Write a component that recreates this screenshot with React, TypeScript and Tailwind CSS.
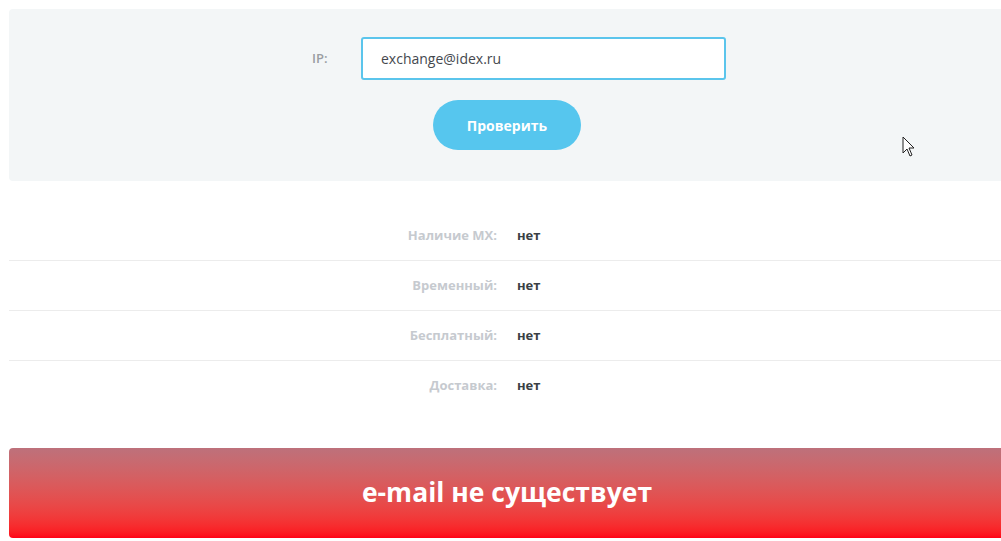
const rows = [
  { label: "Наличие MX:", value: "нет" },
  { label: "Временный:", value: "нет" },
  { label: "Бесплатный:", value: "нет" },
  { label: "Доставка:", value: "нет" },
];

function Cursor() {
  return (
    <svg className="absolute left-[902px] top-[136px]" width="16" height="24" viewBox="0 0 16 24">
      <path d="M1 1 L1 17 L5 13 L8 20 L10 19 L7 12 L12 12 Z" fill="#fff" stroke="#222" strokeWidth="1" strokeLinejoin="round" />
    </svg>
  );
}

export default function App() {
  return (
    <div className="relative w-[1001px] h-[541px] overflow-hidden bg-white pt-[9px] font-['Open_Sans',_'Liberation_Sans',_sans-serif]">
      <div className="ml-[9px] w-[996px]">
        {/* форма проверки */}
        <div className="bg-[#f3f6f7] rounded-[4px] pt-[28px] pb-[31px] flex flex-col items-center">
          <div className="flex items-center ml-[24px]">
            <label className="w-[49px] text-[13px] font-semibold text-[#9a9ea3]">IP:</label>
            <input
              className="w-[365px] h-[43px] bg-white border-2 border-[#5bc5ec] rounded-[3px] px-[18px] text-[14px] text-[#44484e] outline-none"
              type="text"
              defaultValue="exchange@idex.ru"
            />
          </div>
          <button className="mt-[20px] w-[148px] h-[50px] rounded-full bg-[#56c6ee] text-white text-[14px] font-bold">
            Проверить
          </button>
        </div>

        {/* результаты */}
        <div className="mt-[30px]">
          {rows.map((r, i) => (
            <div
              key={r.label}
              className={`flex items-center h-[50px] ${i < rows.length - 1 ? "border-b border-[#ececec]" : ""}`}
            >
              <div className="w-1/2 pr-[10px] text-right text-[13px] font-bold text-[#c6cacf]">{r.label}</div>
              <div className="w-1/2 pl-[10px] text-[13px] font-bold text-[#3a3f45]">{r.value}</div>
            </div>
          ))}
        </div>

        <div className="mt-[37px] h-[90px] rounded-[4px] bg-gradient-to-b from-[#bd717b] to-[#ff0016] flex items-center justify-center">
          <span className="text-white text-[26.5px] font-bold">e-mail не существует</span>
        </div>
      </div>
      <Cursor />
    </div>
  );
}
